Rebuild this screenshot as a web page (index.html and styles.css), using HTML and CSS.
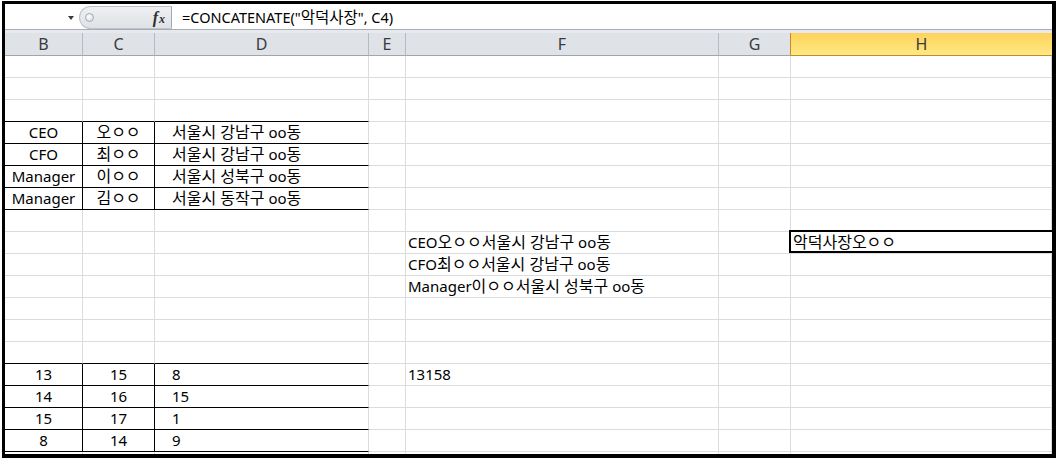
FILE: index.html
```html
<!DOCTYPE html>
<html lang="ko">
<head>
<meta charset="utf-8">
<title>Excel</title>
<link rel="stylesheet" href="styles.css">
</head>
<body>
<div class="frame">
  <div class="fbar">
    <div class="namebox"><span class="arrow"></span></div>
    <div class="panel"><span class="knob"></span><span class="fx">f<span class="fx-x">x</span></span></div>
    <div class="formula">=CONCATENATE("<span class="ko">악덕사장</span>", C4)</div>
  </div>
  <div class="strip"></div>
  <div class="sheet">
    <div class="h">B</div><div class="h">C</div><div class="h">D</div><div class="h">E</div><div class="h">F</div><div class="h gsel">G</div><div class="h hsel">H</div>

    <div class="c"></div><div class="c"></div><div class="c"></div><div class="c"></div><div class="c"></div><div class="c"></div><div class="c"></div>
    <div class="c"></div><div class="c"></div><div class="c"></div><div class="c"></div><div class="c"></div><div class="c"></div><div class="c"></div>
    <div class="c k"></div><div class="c k"></div><div class="c k"></div><div class="c"></div><div class="c"></div><div class="c"></div><div class="c"></div>

    <div class="c k kr ctr">CEO</div><div class="c k kr ctr"><span class="ko">오ㅇㅇ</span></div><div class="c k ind"><span class="ko">서울시 강남구</span> oo<span class="ko">동</span></div><div class="c"></div><div class="c"></div><div class="c"></div><div class="c"></div>
    <div class="c k kr ctr">CFO</div><div class="c k kr ctr"><span class="ko">최ㅇㅇ</span></div><div class="c k ind"><span class="ko">서울시 강남구</span> oo<span class="ko">동</span></div><div class="c"></div><div class="c"></div><div class="c"></div><div class="c"></div>
    <div class="c k kr ctr">Manager</div><div class="c k kr ctr"><span class="ko">이ㅇㅇ</span></div><div class="c k ind"><span class="ko">서울시 성북구</span> oo<span class="ko">동</span></div><div class="c"></div><div class="c"></div><div class="c"></div><div class="c"></div>
    <div class="c k kr ctr">Manager</div><div class="c k kr ctr"><span class="ko">김ㅇㅇ</span></div><div class="c k ind"><span class="ko">서울시 동작구</span> oo<span class="ko">동</span></div><div class="c"></div><div class="c"></div><div class="c"></div><div class="c"></div>

    <div class="c"></div><div class="c"></div><div class="c"></div><div class="c"></div><div class="c"></div><div class="c"></div><div class="c"></div>
    <div class="c"></div><div class="c"></div><div class="c"></div><div class="c"></div><div class="c lf">CEO<span class="ko">오ㅇㅇ서울시 강남구</span> oo<span class="ko">동</span></div><div class="c"></div><div class="c lf sel"><span class="ko">악덕사장오ㅇㅇ</span></div>
    <div class="c"></div><div class="c"></div><div class="c"></div><div class="c"></div><div class="c lf">CFO<span class="ko">최ㅇㅇ서울시 강남구</span> oo<span class="ko">동</span></div><div class="c"></div><div class="c"></div>
    <div class="c"></div><div class="c"></div><div class="c"></div><div class="c"></div><div class="c lf">Manager<span class="ko">이ㅇㅇ서울시 성북구</span> oo<span class="ko">동</span></div><div class="c"></div><div class="c"></div>
    <div class="c"></div><div class="c"></div><div class="c"></div><div class="c"></div><div class="c"></div><div class="c"></div><div class="c"></div>
    <div class="c"></div><div class="c"></div><div class="c"></div><div class="c"></div><div class="c"></div><div class="c"></div><div class="c"></div>
    <div class="c k"></div><div class="c k"></div><div class="c k"></div><div class="c"></div><div class="c"></div><div class="c"></div><div class="c"></div>

    <div class="c k kr ctr">13</div><div class="c k kr ctr">15</div><div class="c k ind">8</div><div class="c"></div><div class="c lf">13158</div><div class="c"></div><div class="c"></div>
    <div class="c k kr ctr">14</div><div class="c k kr ctr">16</div><div class="c k ind">15</div><div class="c"></div><div class="c"></div><div class="c"></div><div class="c"></div>
    <div class="c k kr ctr">15</div><div class="c k kr ctr">17</div><div class="c k ind">1</div><div class="c"></div><div class="c"></div><div class="c"></div><div class="c"></div>
    <div class="c k kr ctr">8</div><div class="c k kr ctr">14</div><div class="c k ind">9</div><div class="c"></div><div class="c"></div><div class="c"></div><div class="c"></div>

    <div class="c"></div><div class="c"></div><div class="c"></div><div class="c"></div><div class="c"></div><div class="c"></div><div class="c"></div>
  </div>
</div>
</body>
</html>
```

FILE: styles.css
```css
* { box-sizing: border-box; }

html, body {
  margin: 0;
  background: #ffffff;
}

body {
  font-family: "Noto Sans", "Noto Sans CJK KR", sans-serif;
  font-size: 15px;
  color: #000;
}

.ko {
  font-size: 16px;
}

.frame {
  margin: 1px 0 0 2px;
  width: 1054px;
  height: 457px;
  border: solid #000;
  border-width: 3px 4px 4px 3px;
  overflow: hidden;
  background: #fff;
}

/* formula bar */
.fbar {
  display: flex;
  height: 26px;
  border-bottom: 1px solid #a9adb3;
  background: #fff;
}

.namebox {
  width: 74px;
  display: flex;
  align-items: center;
  justify-content: flex-end;
  padding-right: 5px;
  padding-top: 3px;
}

.arrow {
  width: 0;
  height: 0;
  border-left: 3.5px solid transparent;
  border-right: 3.5px solid transparent;
  border-top: 4px solid #3a3a3a;
}

.panel {
  margin-top: 2px;
  width: 93px;
  height: 23px;
  display: flex;
  align-items: center;
  padding-left: 5px;
  padding-right: 6px;
  border: 1px solid #bfc3c9;
  border-right: 1px solid #a5a9ae;
  border-radius: 12px 0 0 12px;
  background: linear-gradient(#eef0f2, #dfe2e6);
}

.knob {
  width: 9px;
  height: 9px;
  border-radius: 50%;
  border: 1px solid #a4a9af;
  background: radial-gradient(circle at 40% 35%, #ffffff, #d3d6da);
}

.fx {
  margin-left: auto;
  font-family: "Liberation Serif", serif;
  font-style: italic;
  font-weight: bold;
  font-size: 16px;
  color: #2e2e2e;
  line-height: 1;
}

.fx-x {
  font-size: 12px;
  margin-left: 1px;
}

.formula {
  flex: 1;
  padding-left: 10px;
  line-height: 25px;
  padding-top: 1px;
  white-space: nowrap;
  font-size: 14.5px;
}

.formula .ko {
  font-size: 15.5px;
}

.strip {
  height: 3px;
  background: #e6e9ed;
}

/* sheet grid */
.sheet {
  display: grid;
  grid-template-columns: 78px 72px 214px 37px 313px 72px 261px;
  grid-template-rows: 23px;
  grid-auto-rows: 22px;
}

.h {
  background: #dfe3e8;
  border-right: 1px solid #b6bbc3;
  border-bottom: 1px solid #9ea5ae;
  text-align: center;
  line-height: 22px;
  color: #3b3b3b;
  font-size: 16px;
}

.h.gsel {
  border-right-color: #c4892d;
}

.h.hsel {
  background: linear-gradient(#fdd25c, #ffe983);
  border-bottom-color: #c4892d;
  border-right: none;
}

.c {
  border-right: 1px solid #dadcdd;
  border-bottom: 1px solid #dadcdd;
  line-height: 21px;
  white-space: nowrap;
}

.c.k { border-bottom-color: #000; }
.c.kr { border-right-color: #000; }
.ctr { text-align: center; }
.ind { padding-left: 17px; }
.lf { padding-left: 2px; }

.sel {
  position: relative;
  border-right: none;
}

.sel::after {
  content: "";
  position: absolute;
  left: -2px;
  top: -2px;
  right: -2px;
  bottom: 0;
  border: 2px solid #000;
}
```
